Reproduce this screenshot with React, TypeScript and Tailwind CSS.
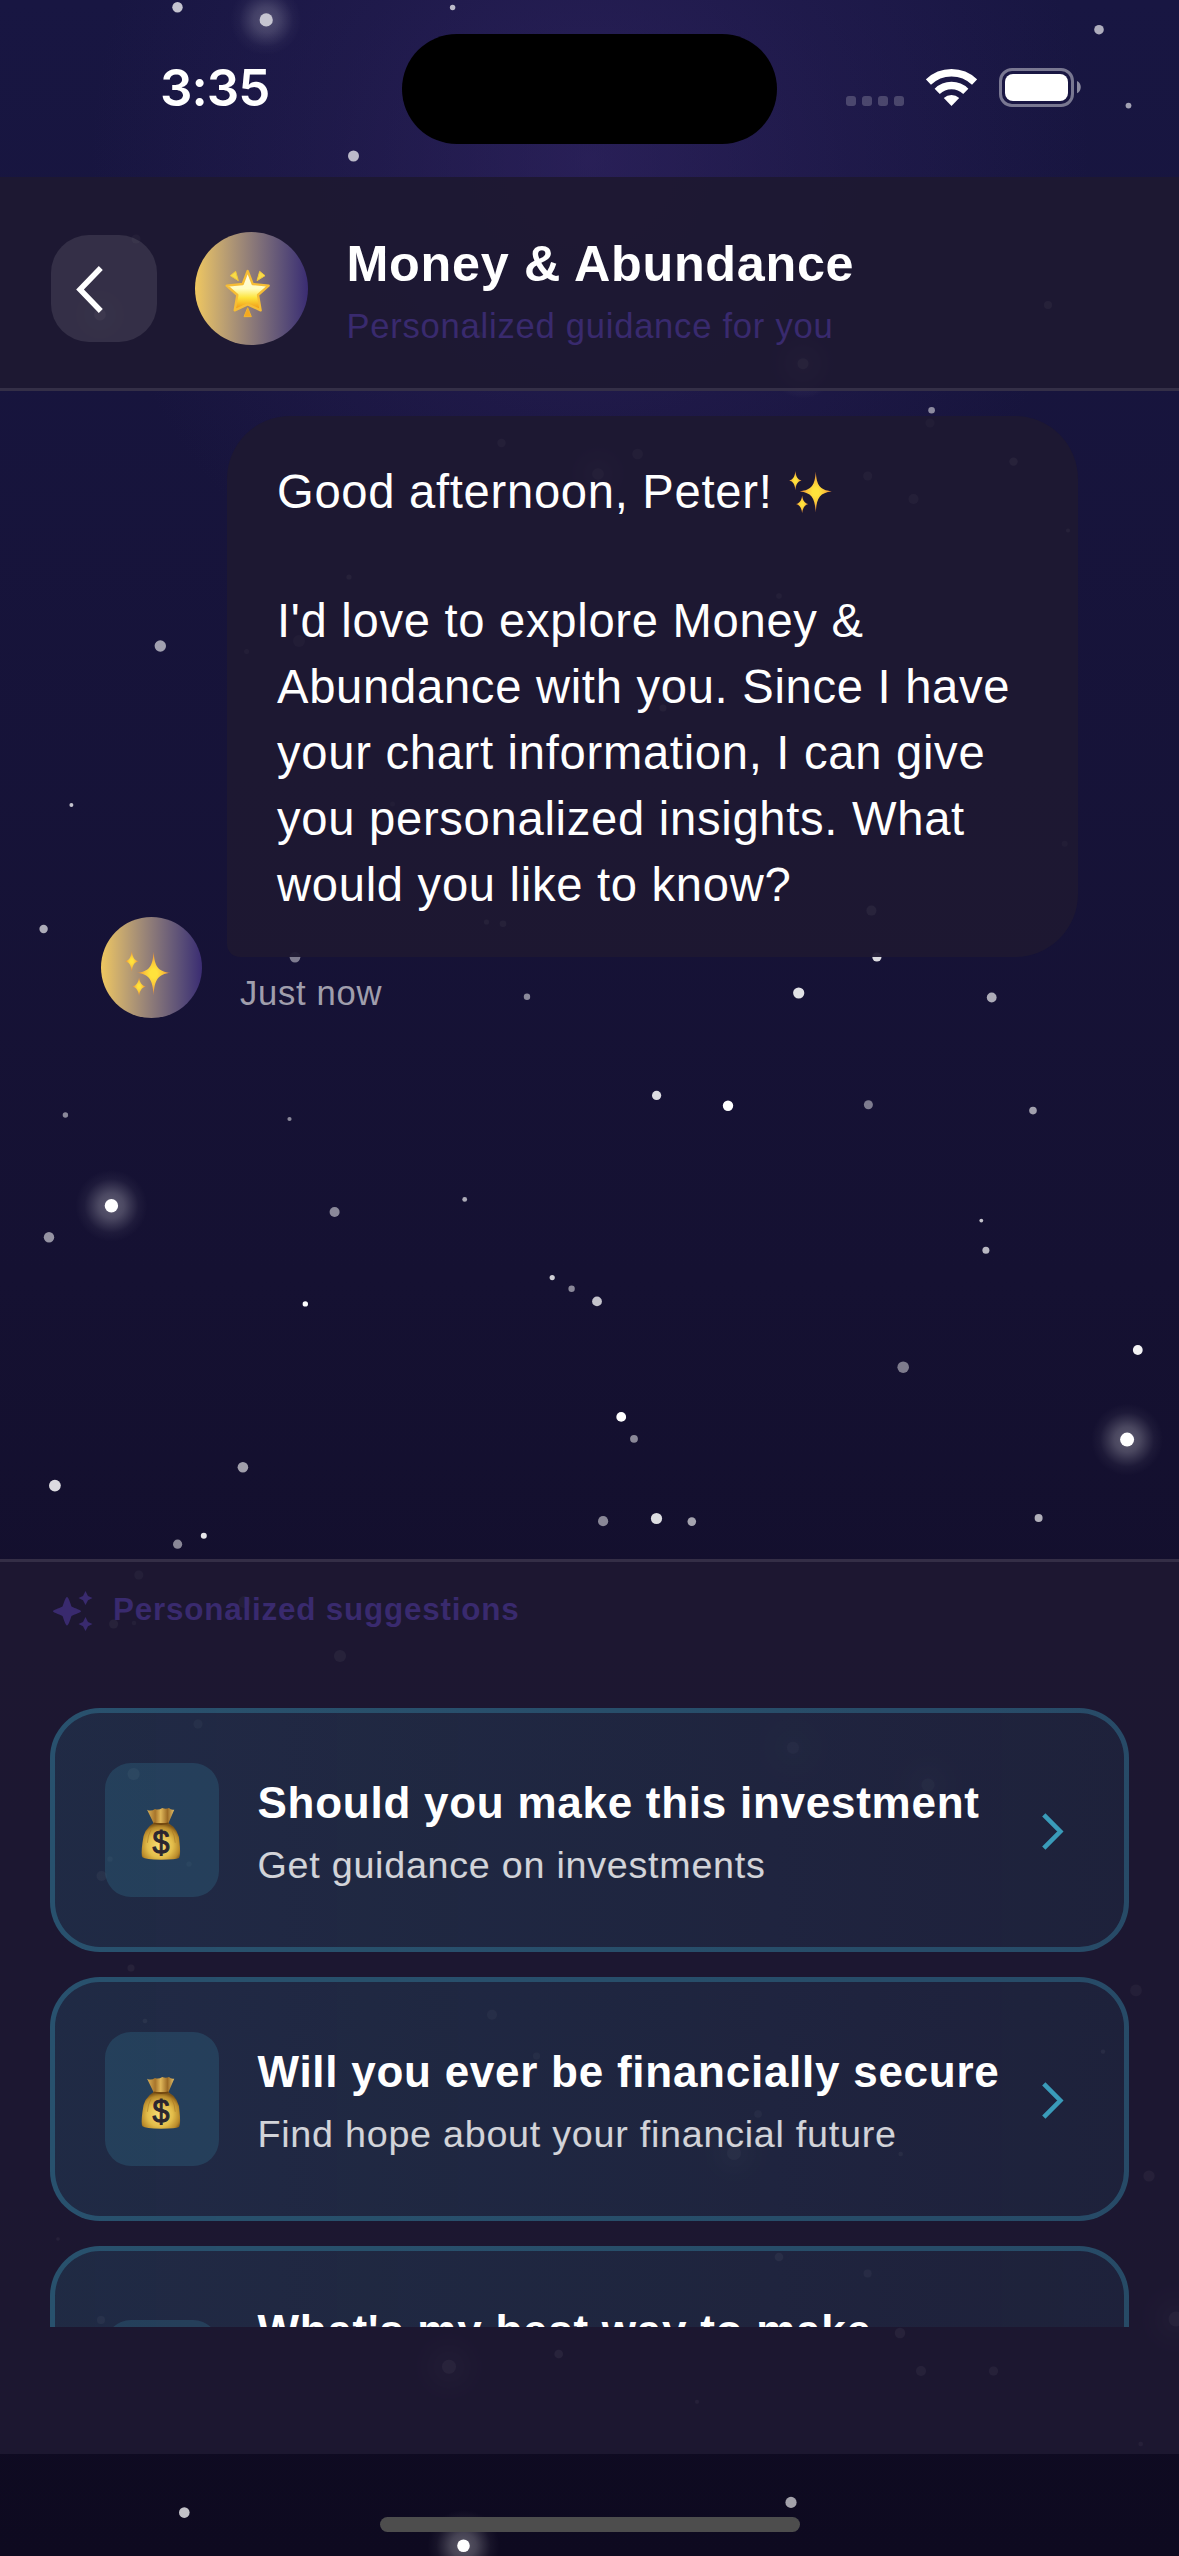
import React from "react";

type Star = [x: number, y: number, r: number, opacity: number];

const STARS: Star[] = [
  [177.5, 7.3, 5.2, 0.75], [452.6, 7.5, 2.7, 0.7], [1099, 29.7, 4.8, 0.65], [1128.5, 105.6, 2.9, 0.6],
  [353.5, 156, 5.5, 0.7], [136, 239, 4.5, 0.5], [1048, 305, 4, 0.7], [480, 335, 3, 0.5],
  [931.6, 410.3, 3.3, 0.5], [930, 423, 4.5, 0.4], [501.5, 443, 4.2, 0.55], [637.6, 454, 5.3, 0.5],
  [1013.5, 461.6, 4.2, 0.8], [867.7, 476, 4.5, 0.6], [913.5, 499, 5, 0.6], [1068, 530.6, 2, 0.7],
  [349, 577, 2.6, 0.7], [779, 596, 2.8, 0.6], [299, 641, 6, 0.4], [246.6, 651.4, 2.5, 0.5],
  [663, 708, 3.5, 0.7], [392.5, 804, 2.5, 0.4], [1064.7, 843.7, 3, 0.4], [871.4, 910.6, 5, 0.9],
  [486.5, 922, 2.6, 0.7], [503, 923.7, 3.3, 0.7], [160.3, 646, 5.7, 0.6], [71.4, 805, 2, 0.75],
  [43.6, 929, 4.2, 0.65], [295, 957.3, 5.3, 0.45], [876.9, 957, 4.6, 0.85], [527, 996.7, 3.2, 0.5],
  [798.7, 993, 5.6, 0.88], [991.7, 997.5, 4.9, 0.65], [65.4, 1115, 2.7, 0.5], [289.5, 1119, 2.1, 0.5],
  [656.6, 1095.4, 4.6, 0.85], [728, 1105.7, 5.2, 1], [868.4, 1104.7, 4.5, 0.45], [1033, 1110.6, 3.8, 0.6],
  [334.6, 1212, 5, 0.5], [464.7, 1199.4, 2.4, 0.65], [981.3, 1220.6, 1.9, 0.75], [49, 1237.3, 5.2, 0.55],
  [985.9, 1250.3, 3.5, 0.7], [552.2, 1277.6, 2.6, 0.8], [571.6, 1288.8, 3.2, 0.5], [597, 1301.4, 4.9, 0.75],
  [305.3, 1303.9, 2.7, 1], [1137.8, 1350, 4.9, 0.95], [903.2, 1367.2, 5.8, 0.45], [621.2, 1416.9, 4.9, 1],
  [634, 1438.8, 3.9, 0.5], [242.9, 1467.3, 5.3, 0.6], [54.9, 1485.6, 5.9, 0.85], [603.1, 1521.2, 5.1, 0.5],
  [656.5, 1518.5, 5.6, 0.86], [691.8, 1521.6, 4.3, 0.62], [1038.6, 1518, 4, 0.67], [203.8, 1535.7, 3, 0.9],
  [177.6, 1544.2, 4.6, 0.5], [138.8, 1575, 4.5, 0.6], [113.6, 1624, 4.5, 0.8], [134, 1623, 2.2, 0.6],
  [244.5, 1602, 6, 0.5], [340, 1656, 6, 0.8], [198, 1724, 4.5, 0.6], [133.6, 1774, 6, 0.8],
  [101.6, 1876, 5, 0.7], [110, 1859, 2.6, 0.6], [189, 1864, 2.6, 0.6], [131, 1968, 3.5, 0.8],
  [145, 2021, 2.3, 0.8], [492, 2014.7, 5, 0.6], [536.5, 2056, 3.5, 0.6], [58, 2239, 1.8, 0.7],
  [101, 2320, 4, 0.7], [558.7, 2354, 4.3, 0.9], [184.3, 2512.6, 5.3, 0.75], [1136, 1990.4, 5.8, 0.6],
  [1103, 2051.6, 2.2, 0.8], [758, 2114, 3.8, 0.6], [900.7, 2154, 2.2, 0.8], [1149, 2176, 5.6, 0.7],
  [779, 2257, 4.3, 0.8], [867.6, 2273.6, 4, 0.7], [900, 2333, 5.2, 0.8], [921, 2371, 5, 0.75],
  [993.5, 2371, 4.6, 0.75], [697, 2401.7, 2, 0.7], [1140.7, 2444, 2.3, 0.7], [791, 2502.4, 5.6, 0.62],
];

const BRIGHT_STARS: Star[] = [
  [266.2, 19.9, 6.6, 0.75], [100, 314.7, 5.8, 0.8], [803, 363.7, 5.5, 0.8], [598, 474, 5.8, 0.6],
  [669, 690, 5.5, 0.4], [111.4, 1205.8, 6.7, 1], [1127.1, 1439.6, 7, 1], [793, 1747.7, 6, 0.6],
  [928, 1785, 6.5, 0.6], [734, 2153, 7, 0.8], [449, 2366.7, 7, 0.9], [1176, 2319, 7.4, 0.8],
  [463.5, 2545.7, 6.3, 1],
];

function NightSky() {
  return (
    <svg className="absolute inset-0" width="1179" height="2556" viewBox="0 0 1179 2556" aria-hidden="true">
      <defs>
        <radialGradient id="glow">
          <stop offset="0.15" stopColor="#fff" stopOpacity="0.28" />
          <stop offset="0.35" stopColor="#fff" stopOpacity="0.23" />
          <stop offset="0.55" stopColor="#fff" stopOpacity="0.13" />
          <stop offset="0.75" stopColor="#fff" stopOpacity="0.04" />
          <stop offset="1" stopColor="#fff" stopOpacity="0" />
        </radialGradient>
      </defs>
      {BRIGHT_STARS.map(([x, y, r, o]) => (
        <g key={`${x}-${y}`} fill="#fff" opacity={o}>
          <circle cx={x} cy={y} r={36} fill="url(#glow)" />
          <circle cx={x} cy={y} r={r} />
        </g>
      ))}
      {STARS.map(([x, y, r, o]) => (
        <circle key={`${x}-${y}`} cx={x} cy={y} r={r} fill="#fff" opacity={o} />
      ))}
    </svg>
  );
}

function StatusBar() {
  return (
    <div className="relative flex h-[177px] shrink-0 items-start">
      <div className="ml-[160px] mt-[56px] w-[242px] font-['Inter'] text-[51px] font-semibold leading-[64px] tracking-[-1px] text-white">
        3:35
      </div>
      <div className="mt-[34px] h-[110px] w-[375px] rounded-[55px] bg-black" />
      <div className="ml-[69px] mt-[96px] flex gap-[6px]">
        {[0, 1, 2, 3].map((i) => (
          <div key={i} className="size-[10px] rounded-[3px] bg-white/20" />
        ))}
      </div>
      <svg className="ml-[22px] mt-[69px]" width="51" height="37" viewBox="0 0 51 37" fill="none">
        <path d="M2.400 13.100a33.200 33.200 0 0 1 46.200 0" stroke="#fff" strokeWidth="7.400" />
        <path d="M11.200 22.300a20.500 20.500 0 0 1 28.600 0" stroke="#fff" strokeWidth="7.400" />
        <path d="M25.500 37 17.800 29a11.500 11.500 0 0 1 15.400 0z" fill="#fff" />
      </svg>
      <svg className="ml-[22px] mt-[68px]" width="84" height="39" viewBox="0 0 84 39" fill="none">
        <rect x="1.5" y="1.5" width="72" height="36" rx="11.5" stroke="#fff" strokeOpacity="0.42" strokeWidth="3" />
        <rect x="6" y="6" width="63" height="27" rx="8" fill="#fff" />
        <path d="M78 13c5 2.300 5 10 0 12.300z" fill="#fff" fillOpacity="0.5" />
      </svg>
    </div>
  );
}

function GlowingStar() {
  return (
    <svg className="ml-[-8px] mt-[10px]" width="46" height="50" viewBox="106 134 138 150">
      <defs>
        <linearGradient id="starFill" x1="0" y1="0" x2="0" y2="1">
          <stop offset="0.05" stopColor="#fffbe8" />
          <stop offset="0.45" stopColor="#fffdc0" />
          <stop offset="0.68" stopColor="#fde43c" />
          <stop offset="0.95" stopColor="#f09a17" />
        </linearGradient>
      </defs>
      <path
        d="M174 140 189 179 237 184 205 212 213 258 174 240 135 258 143 212 111 184 159 179z"
        fill="url(#starFill)"
        stroke="#f6bd35"
        strokeWidth="7"
        strokeLinejoin="round"
      />
      <path d="M138 141 146 169 122 154zM210 141 226 154 202 169z" fill="#f8dc48" stroke="#f1c63a" strokeWidth="3" strokeLinejoin="round" />
      <path d="M174 250 185 277H163z" fill="#f5a81e" stroke="#f3b42c" strokeWidth="3" strokeLinejoin="round" />
    </svg>
  );
}

function Sparkles({ className }: { className: string }) {
  return (
    <svg className={className} viewBox="0 0 138 136">
      <defs>
        <radialGradient id="sparkFill">
          <stop offset="0.2" stopColor="#ffe33c" />
          <stop offset="0.5" stopColor="#fbc93a" />
          <stop offset="1" stopColor="#ea8238" />
        </radialGradient>
      </defs>
      <g fill="url(#sparkFill)">
        <path d="M86 2C89 46 98 62 138 66 98 70 89 88 86 134 83 88 74 70 34 66 74 62 83 46 86 2z" />
        <path d="M20 0C22 18 27 28 40 31 27 34 22 44 20 62 18 44 13 34 0 31 13 28 18 18 20 0z" />
        <path d="M42 79C44 95 50 104 62 107 50 110 44 120 42 136 40 120 34 110 22 107 34 104 40 95 42 79z" />
      </g>
    </svg>
  );
}

function MoneyBag() {
  return (
    <svg className="ml-[-3px] mt-[7px]" width="40" height="53" viewBox="122 154 120 160">
      <defs>
        <radialGradient id="bagFill" cx="0.48" cy="0.62" r="0.6">
          <stop offset="0" stopColor="#f8df78" />
          <stop offset="0.55" stopColor="#e3bd4a" />
          <stop offset="0.85" stopColor="#b98a2b" />
          <stop offset="1" stopColor="#7d5518" />
        </radialGradient>
        <linearGradient id="bagNeck" x1="0" x2="1">
          <stop offset="0" stopColor="#d8b057" />
          <stop offset="0.3" stopColor="#a8752b" />
          <stop offset="0.5" stopColor="#e0b75a" />
          <stop offset="0.75" stopColor="#9c6a25" />
          <stop offset="1" stopColor="#e2c06a" />
        </linearGradient>
      </defs>
      <path d="M140 162Q152 168 164 160 174 165 186 157 196 162 206 157 212 164 222 162L204 204H160z" fill="url(#bagNeck)" />
      <path
        d="M160 202H204Q238 222 238 262 242 300 236 308 228 313 182 313 134 313 126 306 121 298 126 262 128 220 160 202z"
        fill="url(#bagFill)"
      />
      <path d="M160 203Q182 209 204 203" stroke="#71460f" strokeWidth="4" fill="none" />
      <path d="M152 222Q142 240 141 262M214 222Q224 240 225 262" stroke="#a87a25" strokeWidth="3" fill="none" opacity="0.6" />
      <text x="182" y="292" textAnchor="middle" fontFamily="Liberation Sans, sans-serif" fontSize="92" fill="#2b2630" stroke="#2b2630" strokeWidth="3">
        $
      </text>
    </svg>
  );
}

function Header() {
  return (
    <header className="relative flex h-[214px] shrink-0 items-start border-b-[3px] border-white/10 bg-[#1d1832]/95 pl-[51px] pt-[55px]">
      <button className="mt-[3px] flex h-[107px] w-[106px] items-center rounded-[38px] bg-white/10 pl-[23px]">
        <svg width="32" height="50" viewBox="0 0 32 50" fill="none">
          <path d="M26.800 4 6 25.500 26.800 47" stroke="#fff" strokeWidth="5.500" />
        </svg>
      </button>
      <div className="ml-[38px] flex size-[113px] items-center justify-center rounded-full bg-linear-to-r from-[#efc75f] to-[#3b2c72]">
        <GlowingStar />
      </div>
      <div className="ml-[38.5px] mt-[2px]">
        <h1 className="text-[50.3px] font-bold leading-[60px] tracking-[0.72px] text-white">Money &amp; Abundance</h1>
        <p className="mt-[10px] text-[34.6px] leading-[44px] tracking-[0.75px] text-[#392a6e]">
          Personalized guidance for you
        </p>
      </div>
    </header>
  );
}

function Messages() {
  return (
    <main className="relative flex h-[1168px] shrink-0 items-start pl-[101px] pt-[25px]">
      <div className="mt-[501px] flex size-[101px] shrink-0 items-center justify-center rounded-full bg-linear-to-r from-[#efc75f] to-[#3b2c72]">
        <Sparkles className="ml-[-8px] mt-[12px] h-[45px] w-[46px]" />
      </div>
      <div className="ml-[25px] w-[851px]">
        <div className="h-[541px] rounded-[63px] rounded-bl-[13px] bg-[#1d1832]/95 pl-[50px] pt-[43px] text-[47.2px] leading-[66px] tracking-[0.7px] text-white">
          <p className="flex items-center">
            Good afternoon, Peter!
            <Sparkles className="ml-[17px] h-[42px] w-[43px]" />
          </p>
          <p className="mt-[63px] whitespace-nowrap">
            I'd love to explore Money &amp;
            <br />
            Abundance with you. Since I have
            <br />
            your chart information, I can give
            <br />
            you personalized insights. What
            <br />
            would you like to know?
          </p>
        </div>
        <p className="ml-[13px] mt-[14px] text-[34.6px] leading-[44px] tracking-[0.7px] text-white/60">Just now</p>
      </div>
    </main>
  );
}

const SUGGESTIONS = [
  { title: "Should you make this investment", detail: "Get guidance on investments" },
  { title: "Will you ever be financially secure", detail: "Find hope about your financial future" },
  { title: "What's my best way to make" },
];

function SuggestionCard({ title, detail }: { title: string; detail?: string }) {
  return (
    <div
      className={`flex shrink-0 items-center rounded-[50px] border-[5px] border-[#3a9bb9]/35 bg-linear-to-r from-[#3a9bb9]/15 to-[#3a9bb9]/8 bg-origin-border px-[50px] ${
        detail ? "h-[244px]" : "h-[282px]"
      }`}
    >
      <div className="flex h-[134px] w-[114px] shrink-0 items-center justify-center rounded-[26px] bg-[#3a9bb9]/20">
        <MoneyBag />
      </div>
      <div className={`ml-[38.5px] mt-[3px] grow whitespace-nowrap ${detail ? "h-[117px]" : "h-[176px]"}`}>
        <h2 className="text-[44px] font-bold leading-[59px] tracking-[0.74px] text-white">{title}</h2>
        {detail && <p className="mt-[8px] text-[37.7px] leading-[50px] tracking-[0.74px] text-white/80">{detail}</p>}
      </div>
      <svg className="mr-[10px] mt-[3px] shrink-0" width="22" height="37" viewBox="0 0 22 37" fill="none">
        <path d="M1.800 1.800 18.300 18.500 1.800 35.200" stroke="#3a9bb9" strokeWidth="4.600" />
      </svg>
    </div>
  );
}

function Suggestions() {
  return (
    <section className="relative h-[895px] shrink-0 border-t-[3px] border-white/10 bg-[#1d1832]/95 px-[50px] pt-[28px]">
      <div className="flex h-[40px] items-center">
        <svg className="ml-[3px] mt-[2px]" width="40" height="40" viewBox="0 0 40 40" fill="#392a6e">
          <path d="M14 6C15.500 6 17 11.500 18.500 15.500 22.500 17.500 28 19 28 20.300 28 21.500 22.500 23 18.500 25 17 29 15.500 34.500 14 34.500 12.500 34.500 11 29 9.500 25 5.500 23 0 21.500 0 20.300 0 19 5.500 17.500 9.500 15.500 11 11.500 12.500 6 14 6z" />
          <path d="M32.500 0 35 5 39.500 7 35 9.200 32.500 14 30 9.200 25.500 7 30 5z" />
          <path d="M32.500 26 35 31 39.500 33 35 35.200 32.500 40 30 35.200 25.500 33 30 31z" />
        </svg>
        <span className="ml-[20px] text-[31.4px] font-bold leading-[40px] tracking-[0.8px] text-[#392a6e]">
          Personalized suggestions
        </span>
      </div>
      <div className="mt-[78px] flex h-[619px] flex-col gap-[25px] overflow-hidden">
        {SUGGESTIONS.map((s) => (
          <SuggestionCard key={s.title} {...s} />
        ))}
      </div>
    </section>
  );
}

export default function App() {
  return (
    <div className="relative flex h-[2556px] w-[1179px] flex-col overflow-hidden bg-[radial-gradient(circle_at_590px_160px,rgba(59,42,112,0.48),rgba(59,42,112,0.2)_260px,rgba(59,42,112,0)_500px),linear-gradient(to_bottom,#181642,#151132_50%,#0e0a20)] font-['Liberation_Sans',Arial,sans-serif]">
      <NightSky />
      <StatusBar />
      <Header />
      <Messages />
      <Suggestions />
      <footer className="relative flex grow justify-center pt-[63px]">
        <div className="h-[15px] w-[420px] rounded-full bg-[#4d4d4d]" />
      </footer>
    </div>
  );
}
